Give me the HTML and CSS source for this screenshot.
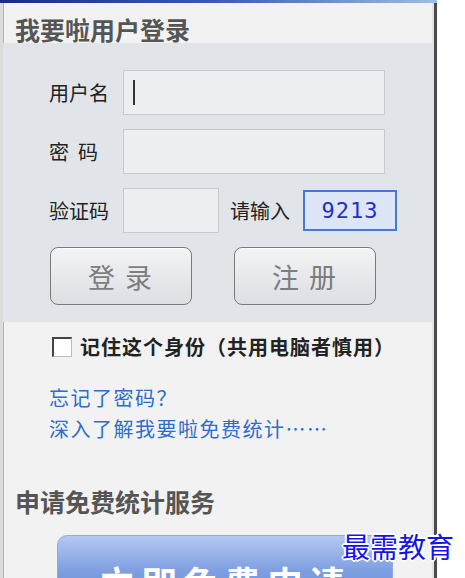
FILE: index.html
```html
<!DOCTYPE html>
<html lang="zh">
  <head>
    <meta charset="utf-8" />
    <title>我要啦用户登录</title>
    <link rel="stylesheet" href="styles.css">
  </head>
  <body>
    <div class="frame">
      <!-- Window title strip -->
      <div class="topbar"></div>

      <div class="panel">
        <h2 class="title">我要啦用户登录</h2>

        <!-- Login form -->
        <div class="login-box">
          <div class="form-row">
            <label for="user">用户名</label>
            <div class="input wide"><span class="caret"></span></div>
          </div>
          <div class="form-row">
            <label for="pass">密&nbsp;&nbsp;码</label>
            <div class="input wide"></div>
          </div>
          <div class="form-row">
            <label for="code">验证码</label>
            <div class="input short"></div>
            <span class="hint">请输入</span>
            <span class="captcha">9213</span>
          </div>
          <div class="button-row">
            <button type="button" class="gray-btn">登&nbsp;录</button>
            <button type="button" class="gray-btn">注&nbsp;册</button>
          </div>
        </div>

        <!-- Remember me -->
        <div class="remember">
          <span class="checkbox"></span>
          <span>记住这个身份（共用电脑者慎用）</span>
        </div>

        <!-- Links -->
        <div class="links">
          <a href="#">忘记了密码？</a>
          <a href="#">深入了解我要啦免费统计……</a>
        </div>

        <h2 class="title section">申请免费统计服务</h2>

        <div class="apply">
          <button type="button" class="blue-btn">立即免费申请</button>
        </div>
      </div>

      <div class="watermark">最需教育</div>
    </div>
  </body>
</html>
```

FILE: styles.css
```css
/* Page basics */
body {
  margin: 0;
  background: #fff;
  font-family: "Noto Sans CJK SC", "Liberation Sans", sans-serif;
  color: #222;
  overflow: hidden;
}

/* Outer window frame */
.frame {
  position: relative;
  width: 437px;
  height: 578px;
}

.topbar {
  height: 3px;
  background: linear-gradient(90deg, #1c2c80, #3b5cb0 50%, #9fbde8);
}

.panel {
  height: 575px;
  background: #f2f2f2;
  border-left: 3px solid #dcdcdc;
  border-right: 3px solid #4b4b4b;
  box-shadow: inset 1px 0 0 #b4b4b4, inset -2px 0 0 #e4e4e4;
  overflow: hidden;
}

/* Section titles */
.title {
  margin: 0;
  padding: 12px 0 0 12px;
  font-size: 25px;
  line-height: 28px;
  font-weight: bold;
  color: #555;
}

/* Grey login area */
.login-box {
  background: #e1e5ea;
  padding: 27px 0 17px 46px;
  display: flex;
  flex-direction: column;
  gap: 14px;
}

.form-row {
  display: flex;
  align-items: center;
  height: 45px;
}
.form-row label {
  width: 74px;
  font-size: 20px;
  color: #222;
}

.input {
  border: 1px solid #c6c9cd;
  background: #eceef2;
  box-sizing: border-box;
  height: 45px;
  display: flex;
  align-items: center;
}
.wide {
  width: 262px;
}
.short {
  width: 96px;
}
.caret {
  width: 2px;
  height: 25px;
  margin-left: 9px;
  background: #333;
}

.hint {
  margin-left: 11px;
  font-size: 20px;
}

.captcha {
  margin-left: 13px;
  width: 94px;
  height: 41px;
  box-sizing: border-box;
  border: 2px solid #4778d6;
  background: #dce6f7;
  color: #2230c8;
  font-family: "DejaVu Sans Mono", monospace;
  font-size: 22px;
  line-height: 37px;
  text-align: center;
  letter-spacing: 1px;
}

/* Login / register buttons */
.button-row {
  display: flex;
  gap: 42px;
  padding-left: 1px;
}
.gray-btn {
  width: 142px;
  height: 58px;
  border: 1px solid #7a7a7a;
  border-radius: 8px;
  background: linear-gradient(#f2f3f5, #dcdfe3);
  color: #7d7d7d;
  font-family: "Noto Sans CJK SC", sans-serif;
  font-size: 27px;
  letter-spacing: 2px;
  box-shadow: inset 0 1px 0 #fff;
}

/* Remember me row */
.remember {
  display: flex;
  align-items: center;
  gap: 8px;
  margin: 10px 0 0 49px;
  font-size: 20px;
  font-weight: bold;
  color: #222;
  letter-spacing: 1px;
}
.checkbox {
  width: 20px;
  height: 20px;
  box-sizing: border-box;
  background: #fff;
  border-top: 2px solid #444;
  border-left: 2px solid #444;
  border-right: 1px solid #bbb;
  border-bottom: 1px solid #bbb;
}

/* Blue links */
.links {
  display: flex;
  flex-direction: column;
  margin: 21px 0 0 46px;
}
.links a {
  font-size: 20px;
  line-height: 31px;
  color: #2e6ccc;
  text-decoration: none;
  letter-spacing: 1.5px;
}

.section {
  margin-top: 42px;
  padding: 0 0 0 12px;
  line-height: 30px;
}

/* Big blue apply button */
.apply {
  margin: 19px 0 0 54px;
}
.blue-btn {
  width: 336px;
  height: 80px;
  border: 1px solid #8eaae6;
  border-radius: 10px;
  background: linear-gradient(#b4c9f1, #7d9ee0 45%, #6a8dd8);
  color: #fff;
  font-family: "Noto Sans CJK SC", sans-serif;
  font-size: 36px;
  font-weight: bold;
  padding: 20px 0 0;
  display: flex;
  justify-content: center;
  align-items: flex-start;
  letter-spacing: 6px;
}

/* Watermark over the corner */
.watermark {
  position: absolute;
  left: 342px;
  top: 526px;
  font-size: 28px;
  color: #1414e6;
  text-shadow: 2px 0 0 #fff, -2px 0 0 #fff, 0 2px 0 #fff, 0 -2px 0 #fff,
    1px 1px 0 #fff, -1px -1px 0 #fff, 1px -1px 0 #fff, -1px 1px 0 #fff;
  white-space: nowrap;
}
```
